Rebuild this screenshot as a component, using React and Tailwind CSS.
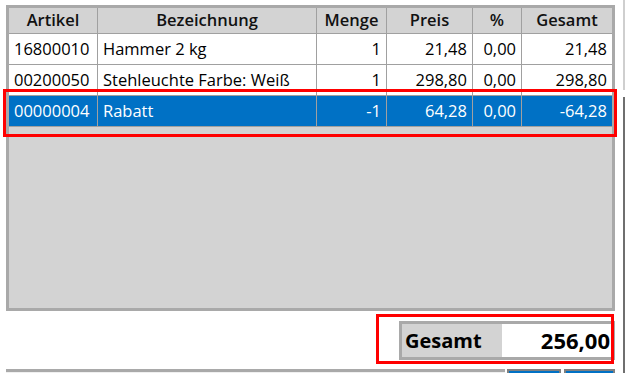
const cols = [
  { key: 'artikel', label: 'Artikel', w: 'w-[89px]', align: 'text-left' },
  { key: 'bez', label: 'Bezeichnung', w: 'w-[219px]', align: 'text-left' },
  { key: 'menge', label: 'Menge', w: 'w-[70px]', align: 'text-right' },
  { key: 'preis', label: 'Preis', w: 'w-[86px]', align: 'text-right' },
  { key: 'pct', label: '%', w: 'w-[49px]', align: 'text-right' },
  { key: 'gesamt', label: 'Gesamt', w: 'w-[90px]', align: 'text-right' },
];

const rows = [
  { artikel: '16800010', bez: 'Hammer 2 kg', menge: '1', preis: '21,48', pct: '0,00', gesamt: '21,48' },
  { artikel: '00200050', bez: 'Stehleuchte Farbe: Weiß', menge: '1', preis: '298,80', pct: '0,00', gesamt: '298,80' },
  { artikel: '00000004', bez: 'Rabatt', menge: '-1', preis: '64,28', pct: '0,00', gesamt: '-64,28', selected: true },
];

export default function App() {
  return (
    <div
      className="relative w-[626px] h-[373px] overflow-hidden bg-white flex"
      style={{ fontFamily: '"Open Sans", "Noto Sans", sans-serif' }}
    >
      <div className="w-[615px] pl-[6px] pt-[5px] flex flex-col">
        {/* grid */}
        <div className="w-[609px] h-[306px] border-[3px] border-[#a9a9a9] bg-[#d3d3d3]">
          <div className="flex h-[26px] border-b border-[#a0a0a0]">
            {cols.map(c => (
              <div
                key={c.key}
                className={`${c.w} h-full border-r border-[#a0a0a0] last:border-r-0 flex items-center justify-center text-[16.5px] font-semibold text-[#111]`}
              >
                {c.label}
              </div>
            ))}
          </div>
          {rows.map(r => (
            <div
              key={r.artikel}
              className={`flex h-[31px] border-b border-[#a0a0a0] ${r.selected ? 'bg-[#0071c5] text-white' : 'bg-white text-black'}`}
            >
              {cols.map(c => (
                <div
                  key={c.key}
                  className={`${c.w} h-full border-r border-[#a0a0a0] last:border-r-0 flex items-center px-[5px] pt-[1px] text-[16.5px] whitespace-nowrap overflow-hidden ${c.align === 'text-right' ? 'justify-end' : 'justify-start'}`}
                >
                  {r[c.key]}
                </div>
              ))}
            </div>
          ))}
        </div>

        {/* total */}
        <div className="flex justify-end mt-[10px]">
          <div className="w-[216px] h-[39px] border-[3px] border-[#a9a9a9] flex">
            <div className="w-[100px] bg-[#d3d3d3] flex items-center pl-[3px] text-[20px] font-bold text-black">
              Gesamt
            </div>
            <div className="flex-1 bg-white flex items-center justify-end pr-[2px] text-[22px] font-bold text-black">
              256,00
            </div>
          </div>
        </div>

        {/* bottom controls, cut off */}
        <div className="flex mt-[9px] flex-1">
          <div className="w-[499px] border-t-[3px] border-[#a9a9a9] bg-[#f0f0f0]" />
          <div className="ml-[2px] w-[54px] border-2 border-b-0 border-[#808080] bg-[#0071c5]" />
          <div className="ml-[3px] w-[51px] border-2 border-b-0 border-[#808080] bg-[#0071c5]" />
        </div>
      </div>

      {/* right edge strip */}
      <div className="ml-[8px] w-[2px] flex flex-col">
        <div className="h-[90px] bg-[#cfcfcf]" />
        <div className="h-[7px]" />
        <div className="flex-1 bg-[#6f6f6f]" />
      </div>

      {/* annotation boxes */}
      <div className="absolute left-[3px] top-[89px] w-[614px] h-[48px] border-[3px] border-[#ff0000]" />
      <div className="absolute left-[376px] top-[314px] w-[238px] h-[50px] border-[3px] border-[#ff0000]" />
    </div>
  );
}
